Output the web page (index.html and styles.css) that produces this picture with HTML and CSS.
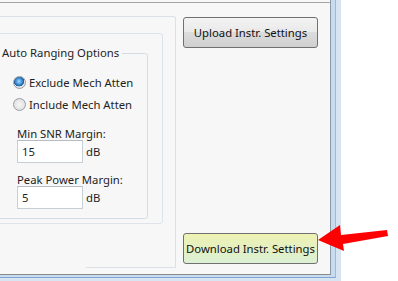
FILE: index.html
```html
<!DOCTYPE html>
<html lang="en">
<head>
    <meta charset="UTF-8">
    <meta name="viewport" content="width=device-width, initial-scale=1.0">
    <title>Instrument Settings</title>
    <link rel="stylesheet" href="styles.css">
</head>
<body>
    <div class="outer">
        <div class="mid">
            <div class="client">
                <div class="window">
                    <div class="panel">
                        <div class="section">
                            <fieldset class="group">
                                <legend>Auto Ranging Options</legend>
                                <label class="radio-row"><span class="radio checked"></span>Exclude Mech Atten</label>
                                <label class="radio-row"><span class="radio"></span>Include Mech Atten</label>
                                <div class="field-label">Min SNR Margin:</div>
                                <div class="field">
                                    <input class="input" type="text" value="15">
                                    <span class="unit">dB</span>
                                </div>
                                <div class="field-label second">Peak Power Margin:</div>
                                <div class="field">
                                    <input class="input" type="text" value="5">
                                    <span class="unit">dB</span>
                                </div>
                            </fieldset>
                        </div>
                    </div>
                    <div class="actions">
                        <button class="btn">Upload Instr. Settings</button>
                        <button class="btn btn-green">Download Instr. Settings</button>
                    </div>
                </div>
            </div>
        </div>
    </div>

    <!-- callout arrow pointing at the download button -->
    <svg class="arrow" viewBox="310 220 85 35" width="85" height="35">
        <polygon points="318,240 340,225 341,235 387,230 388,236 343,244 344,251" fill="#f00"/>
    </svg>
</body>
</html>
```

FILE: styles.css
```css
* {
    box-sizing: border-box;
}

body {
    margin: 0;
    width: 398px;
    height: 281px;
    overflow: hidden;
    position: relative;
    background: #fff;
    font-family: "Noto Sans", "Open Sans", sans-serif;
    font-size: 11.3px;
    color: #1e1e1e;
}

/* window frame */
.outer {
    display: inline-block;
    vertical-align: top;
    background: #d7e4f2;
    padding: 0 5px 3px 0;
}

.mid {
    background: #c9dbee;
    border-right: 1px solid #a4b8cf;
    border-bottom: 1px solid #7ea5d3;
    padding: 0 4px 2px 0;
}

.client {
    width: 331px;
    background: #f7f7f7;
    border-right: 1px solid #8c99a8;
    border-bottom: 1px solid #8a8a8a;
    padding-top: 2px;
}

.window {
    height: 272px;
    border-top: 1px solid #a5a5a5;
    display: flex;
    align-items: flex-start;
}

/* left settings area */
.panel {
    flex-shrink: 0;
    width: 196px;
    height: 252px;
    margin: 13px 0 0 -20px;
    padding: 16px 12px 0 4px;
    border: 1px solid #dbe1e7;
    border-bottom: none;
    border-radius: 0 3px 0 0;
    background: linear-gradient(#dbe1e7, #dbe1e7) right bottom / 89px 1px no-repeat;
}

.section {
    height: 191px;
    display: flex;
    flex-direction: column;
    padding: 11px 14px 4px 8px;
    border: 1px solid #dde3e8;
    border-radius: 3px;
}

.group {
    flex: 1;
    min-width: 0;
    margin: 0;
    padding: 0 0 0 5px;
    border: 1px solid #d5dde4;
    border-radius: 3px;
}

.group legend {
    padding: 0 3px 0 2px;
    line-height: 16px;
}

.radio-row {
    display: flex;
    align-items: center;
    height: 22px;
    padding-left: 13px;
}

.radio-row:first-of-type {
    margin-top: 10px;
}

.radio {
    flex-shrink: 0;
    width: 13px;
    height: 13px;
    margin-right: 3px;
    border: 1px solid #9a9ea3;
    border-radius: 50%;
    background: radial-gradient(circle at 50% 50%, #f6f6f6 0, #e2e2e2 70%, #cfcfcf 100%);
}

.radio.checked {
    background:
        radial-gradient(circle at 45% 40%, #a6dbff 0, #3d8fd6 35%, #1f5c9a 55%, transparent 58%),
        radial-gradient(circle, #f6f6f6 0, #e2e2e2 70%, #cfcfcf 100%);
}

.field-label {
    line-height: 12px;
    padding-left: 17px;
    margin-top: 13px;
}

.field-label.second {
    margin-top: 11px;
}

.field {
    display: flex;
    align-items: center;
    padding-left: 17px;
}

.input {
    width: 66px;
    height: 23px;
    margin: 0;
    padding: 0 4px;
    border: 1px solid #c6ced6;
    border-top-color: #b5bcc4;
    background: #fff;
    font: inherit;
    color: #1e1e1e;
}

.unit {
    margin-left: 3px;
}

/* buttons column */
.actions {
    align-self: stretch;
    display: flex;
    flex-direction: column;
    justify-content: space-between;
    margin-left: 7px;
    padding: 14px 0 10px;
}

.btn {
    width: 135px;
    height: 31px;
    padding: 0;
    border: 1px solid #707070;
    border-radius: 3px;
    background: linear-gradient(#f3f3f3, #e9e9e9 50%, #dcdcdc 50%, #d0d0d0);
    font: inherit;
    color: #111;
    white-space: nowrap;
}

.btn-green {
    background: linear-gradient(#eef2b2, #e4f0c2 50%, #dcf0d6);
}

.arrow {
    position: absolute;
    left: 310px;
    top: 220px;
}
```
